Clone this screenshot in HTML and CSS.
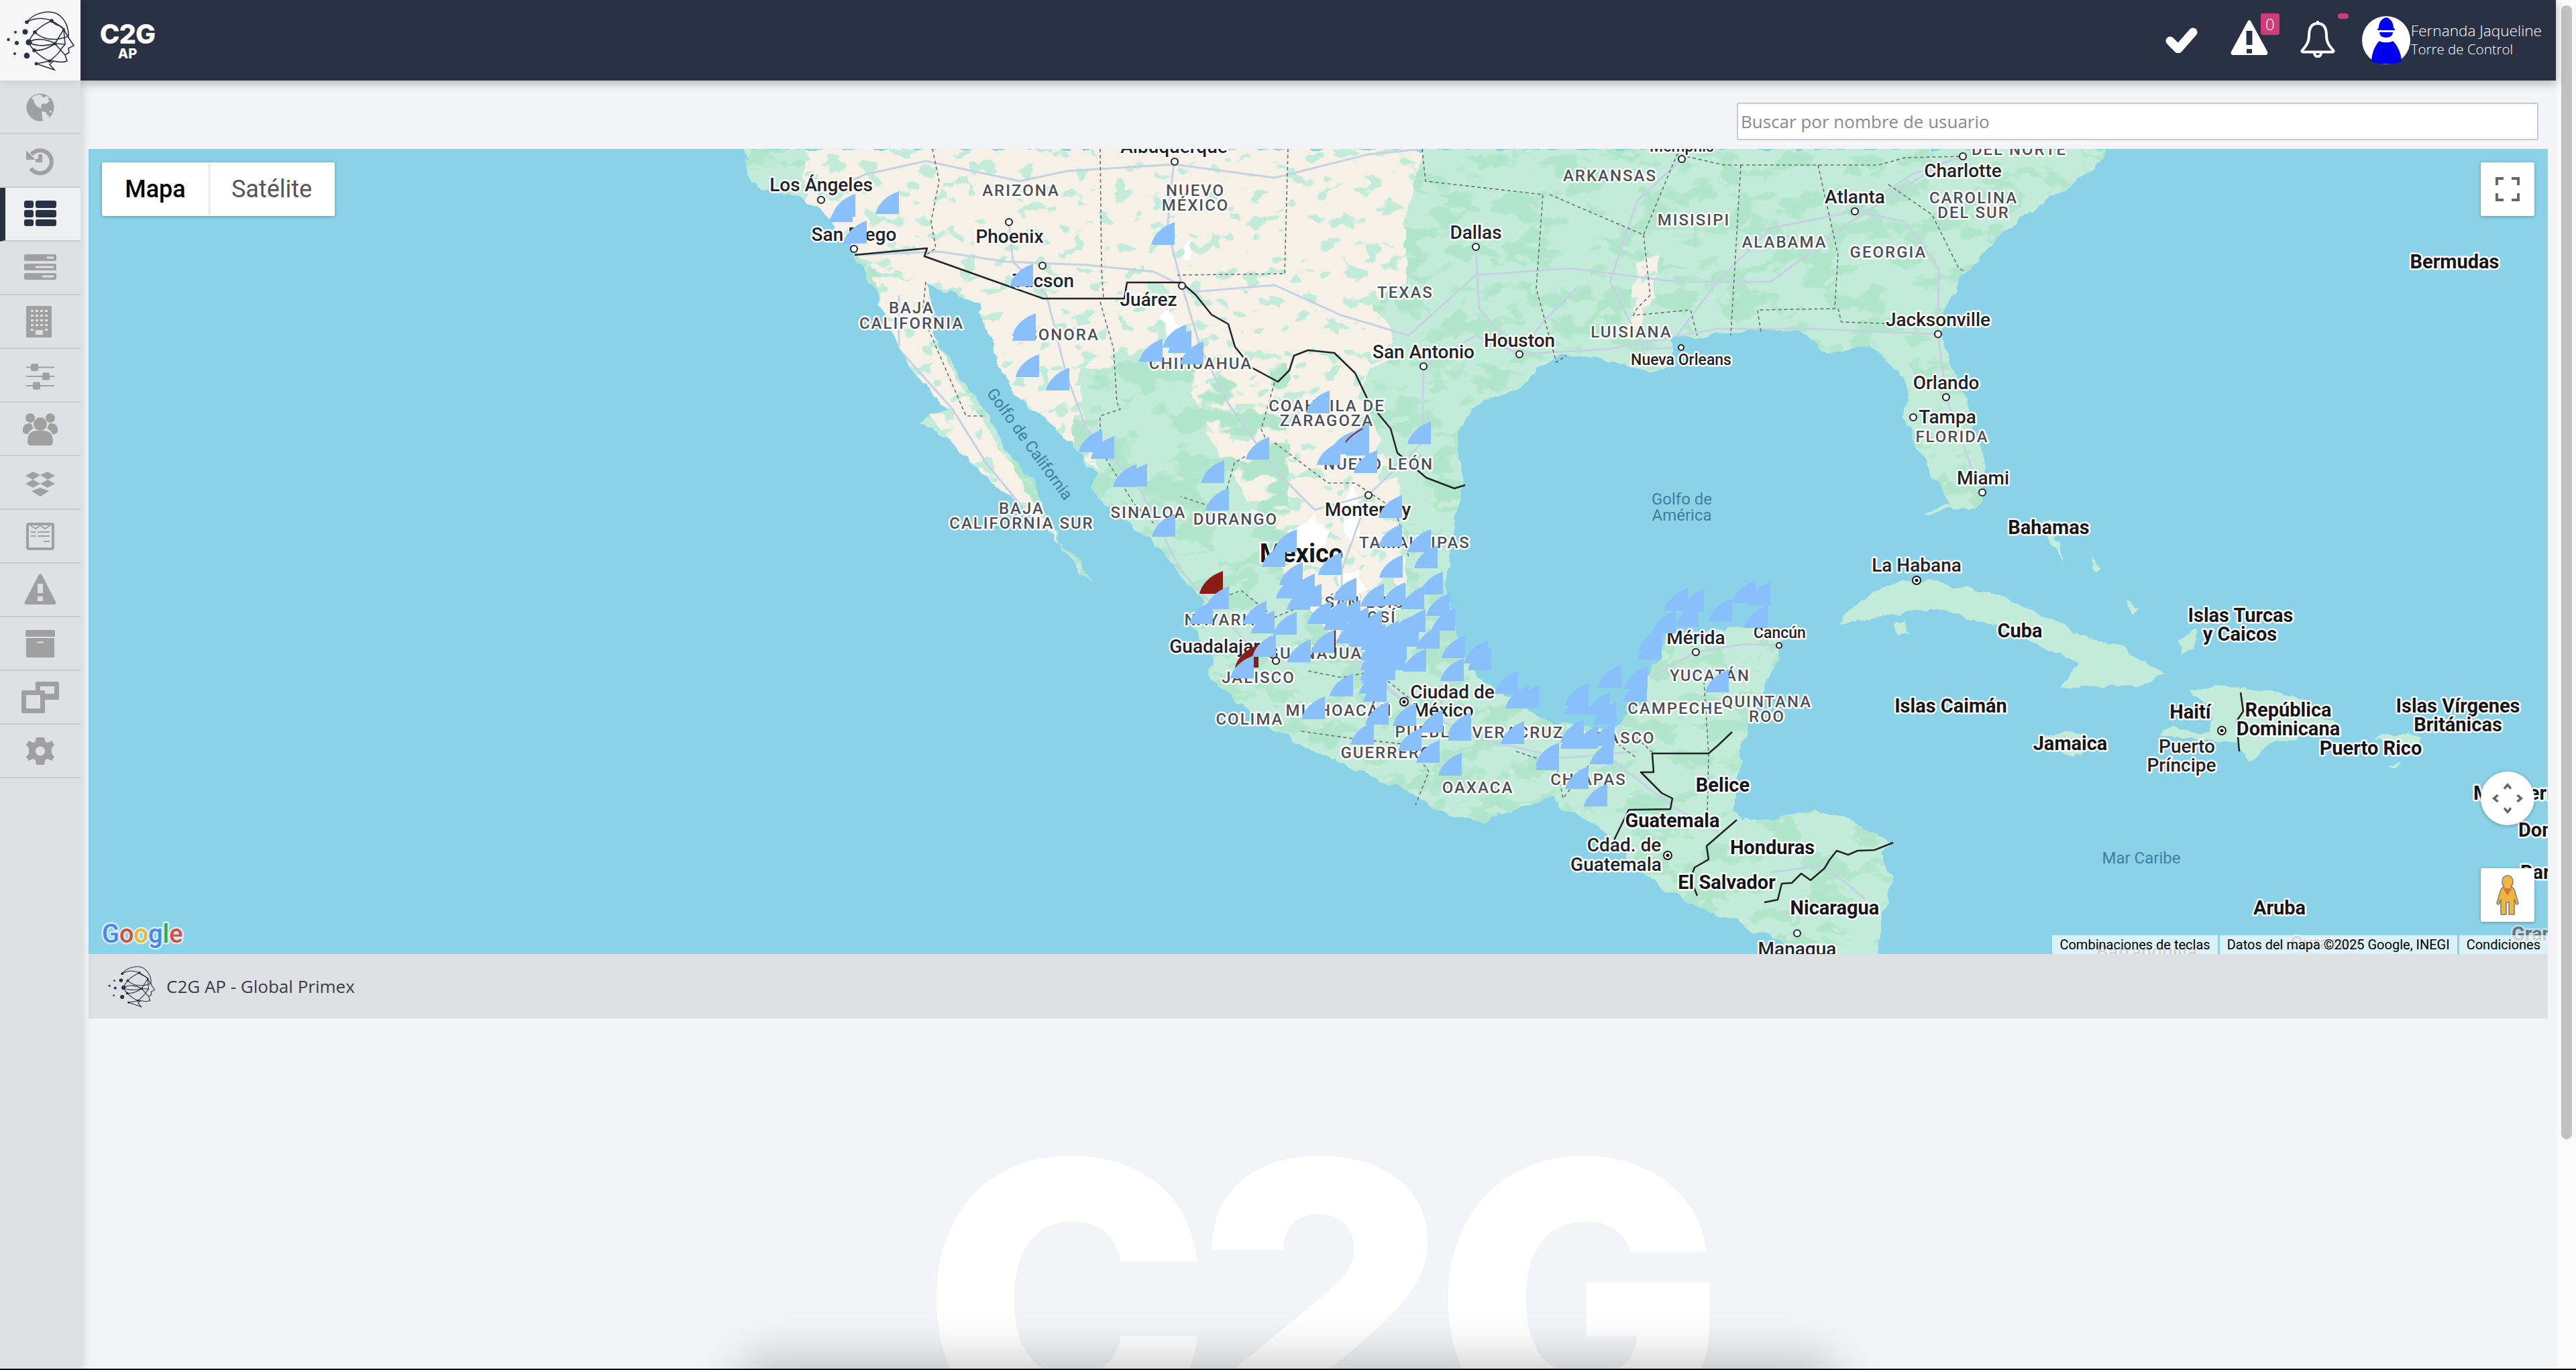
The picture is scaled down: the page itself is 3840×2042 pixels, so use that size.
FILE: index.html
```html
<!DOCTYPE html>
<html lang="es">
<head>
    <meta charset="UTF-8">
    <title>C2G AP - Global Primex</title>
    <link rel="stylesheet" href="styles.css">
</head>
<body>
    <svg class="defs" width="0" height="0">
        <symbol id="head" viewBox="8 8 104 92">
            <g fill="none" stroke="#2b3144" stroke-width="1.6">
                <path d="M40 27C50 13 76 6 90 18C100 27 103 40 102 50L110 62L102 66L103 72L97 76L100 85C92 88 84 86 80 85L74 90L81 98L54 89"/>
                <path d="M40 27C52 20 66 20 77 25C86 30 92 34 95 38L102 50M77 25C66 30 58 35 52 42C47 48 44 52 43 57C45 63 48 66 51 69C58 76 66 82 74 85L80 85"/>
                <path d="M52 42C60 50 72 54 88 52L100 49M43 57C54 50 70 52 82 59C86 64 92 70 97 76M43 57C50 62 66 64 82 59M51 69C62 70 72 66 82 59L95 38M77 25C84 35 92 30 95 38L97 60L82 59M74 85C80 80 88 74 92 66L97 60M54 89L74 85"/>
            </g>
            <g fill="#2b3144">
                <circle cx="40" cy="27" r="2.8"/><circle cx="77" cy="25" r="2.8"/><circle cx="52" cy="42" r="2.8"/><circle cx="95" cy="38" r="2"/>
                <circle cx="82" cy="59" r="2.6"/><circle cx="51" cy="69" r="2.8"/><circle cx="74" cy="85" r="2.4"/><circle cx="54" cy="89" r="2.4"/>
                <circle cx="23" cy="42" r="2"/><circle cx="37.5" cy="41.5" r="4"/><circle cx="12.5" cy="53" r="2.2"/><circle cx="25" cy="58" r="3"/>
                <circle cx="43" cy="57" r="4.6"/><circle cx="22" cy="74" r="2"/><circle cx="40" cy="77" r="4.4"/>
            </g>
        </symbol>
        <path id="w" d="M0 34C3 20 15 7 35 0V34Z"/>
    </svg>

    <div class="page">
        <aside class="sidebar">
            <div class="side-logo"><svg class="logo-big"><use href="#head"/></svg></div>
            <nav class="side-nav">
                <a class="nav-item">
                    <svg viewBox="0 0 120 78"><circle cx="60" cy="40" r="20.5"/><path class="cut" d="M53 22l6-1 4 1-1 2 4 1 3-2 5 3-3 2 3 2-5 5-5-1-3 3 1 4-5-1-5-5-2-6-3-2 2-3zM62 46l6 1 2 4 3 1 0 4-8 6-2-6zM74 44l4 3-4 1z"/></svg>
                </a>
                <a class="nav-item">
                    <svg viewBox="0 0 120 78"><path class="line" d="M47 30A17 17 0 1 1 46 51"/><path d="M39 24V38H53Z"/><path d="M57 30H63V42H53V37H57Z"/></svg>
                </a>
                <a class="nav-item active">
                    <svg viewBox="0 0 120 78"><rect x="36" y="19" width="14" height="11" rx="3"/><rect x="53" y="19" width="31" height="11" rx="3"/><rect x="36" y="33" width="14" height="11" rx="3"/><rect x="53" y="33" width="31" height="11" rx="3"/><rect x="36" y="47" width="14" height="10" rx="3"/><rect x="53" y="47" width="31" height="10" rx="3"/></svg>
                </a>
                <a class="nav-item">
                    <svg viewBox="0 0 120 78"><rect x="36" y="19" width="48" height="10" rx="2.5"/><rect x="36" y="33" width="48" height="10" rx="2.5"/><rect x="36" y="47" width="48" height="10" rx="2.5"/><path class="cut" d="M70 22.500h10v3H70zM53 36.500h27v3H53zM63 50.500h17v3H63z"/></svg>
                </a>
                <a class="nav-item">
                    <svg viewBox="0 0 120 78"><rect x="39" y="16" width="38" height="47" rx="1.500"/><path class="cut" d="M46 22h4v3h-4zM53 22h4v3h-4zM60 22h4v3h-4zM67 22h4v3h-4zM46 29h4v3h-4zM53 29h4v3h-4zM60 29h4v3h-4zM67 29h4v3h-4zM46 36h4v3h-4zM53 36h4v3h-4zM60 36h4v3h-4zM67 36h4v3h-4zM46 43h4v3h-4zM53 43h4v3h-4zM60 43h4v3h-4zM67 43h4v3h-4zM46 50h4v3h-4zM67 50h4v3h-4zM53 52h11v7H53z"/></svg>
                </a>
                <a class="nav-item">
                    <svg viewBox="0 0 120 78"><path d="M39 26.500h42v2H39zM39 40h42v2H39zM39 54h42v2H39z"/><rect x="46" y="22" width="11" height="11" rx="2"/><rect x="63" y="35.500" width="11" height="11" rx="2"/><rect x="49" y="49.500" width="11" height="11" rx="2"/></svg>
                </a>
                <a class="nav-item">
                    <svg viewBox="0 0 120 78"><circle cx="45" cy="23" r="7"/><circle cx="75" cy="23" r="7"/><path d="M34 42C34 33 38 31 46 31L50 38C46 41 43 43 42 47C37 47 34 46 34 42ZM86 42C86 33 82 31 74 31L70 38C74 41 77 43 78 47C83 47 86 46 86 42Z"/><circle cx="60" cy="32" r="10"/><path d="M41 58C41 46 47 42 55 42H65C73 42 79 46 79 58C79 62 77 64 73 64H47C43 64 41 62 41 58Z"/></svg>
                </a>
                <a class="nav-item">
                    <svg viewBox="0 0 120 78"><path d="M38 29L49 23L60 28L49 35ZM60 28L71 23L82 29L71 35ZM38 41L49 35L60 41L49 47ZM60 41L71 35L82 41L71 47Z"/><path d="M47 52L60 47L73 52L60 60Z"/></svg>
                </a>
                <a class="nav-item">
                    <svg viewBox="0 0 120 78"><rect class="outline" x="41" y="21" width="38" height="37" rx="2"/><path class="thin" d="M45 23L53 28L60 23L67 28L75 23"/><path d="M46 32h7v2h-7zM56 32h18v2H56zM46 38h7v2h-7zM56 38h18v2H56zM65 46h9v2h-9z"/></svg>
                </a>
                <a class="nav-item">
                    <svg viewBox="0 0 120 78"><path fill-rule="evenodd" d="M60 15C61 15 62 16 63 18L83 57C84 59 83 61 81 61H39C37 61 36 59 37 57L57 18C58 16 59 15 60 15ZM56 30V44H64V30ZM56 49V56H64V49Z"/></svg>
                </a>
                <a class="nav-item">
                    <svg viewBox="0 0 120 78"><rect x="38" y="19" width="44" height="10" rx="1.500"/><path fill-rule="evenodd" d="M39 31H81V59C81 60 80 60 79 60H41C40 60 39 60 39 59ZM55 36.500V38.500H65V36.500Z"/></svg>
                </a>
                <a class="nav-item">
                    <svg viewBox="0 0 120 78"><path fill-rule="evenodd" d="M53 18C53 17 54 16 55 16H86C87 16 88 17 88 18V41C88 42 87 43 86 43H67V34H81V23H60V29H53ZM32 31C32 30 33 29 34 29H65C66 29 67 30 67 31V61C67 62 66 63 65 63H34C33 63 32 62 32 61ZM39 36V56H60V36Z"/></svg>
                </a>
                <a class="nav-item">
                    <svg viewBox="0 0 120 78"><path fill-rule="evenodd" d="M54 19H66L67 25L71 27L77 24L81 30L77 35V43L81 48L77 54L71 51L67 53L66 60H54L53 53L49 51L43 54L39 48L43 43V35L39 30L43 24L49 27L53 25ZM60 32.500A7 7 0 1 0 60.010 46.500A7 7 0 1 0 60 32.500Z"/></svg>
                </a>
            </nav>
        </aside>

        <div class="main">
            <header class="topbar">
                <div class="brand-mark">
                    <span class="brand-big">C2G</span>
                    <span class="brand-small">AP</span>
                </div>
                <div class="top-actions">
                    <svg class="ico-check" width="49" height="38" viewBox="0 0 49 38"><path d="M8 20L20 32L42 7"/></svg>
                    <div class="alert-wrap">
                        <svg width="56" height="52" viewBox="0 0 56 52"><path fill-rule="evenodd" d="M28 0C29 0 30 1 31 3L55 47C56 50 55 52 52 52H4C1 52 0 50 1 47L25 3C26 1 27 0 28 0ZM23.500 16V37H32.500V16ZM24 43V49.500H32V43Z" fill="#fff"/></svg>
                        <span class="badge">0</span>
                    </div>
                    <div class="bell-wrap">
                        <svg width="52" height="56" viewBox="0 0 52 56"><path class="bell" d="M26 5C16 5 13 13 13 23C13 33 9 38 3 45C2 46 2 47.500 4 47.500H48C50 47.500 50 46 49 45C43 38 39 33 39 23C39 13 36 5 26 5Z"/><path class="bell" d="M26 1V5M21 49C21 56 31 56 31 49"/></svg>
                        <span class="dot"></span>
                    </div>
                    <svg class="avatar" width="72" height="72" viewBox="0 0 72 72">
                        <circle cx="36" cy="36" r="36" fill="#fff"/>
                        <path fill="#0000ee" d="M25 18C25 9 30 3 36 2C42 3 47 9 47 18L49 19V21H23V19ZM26 24H46C46 29 42 32 36 32C30 32 26 29 26 24ZM26 37C29 40 43 40 46 37C53 44 58 54 59 67C52 73 20 73 14 67C15 54 19 44 26 37Z"/>
                    </svg>
                    <div class="user-info">
                        <span class="user-name">Fernanda Jaqueline</span>
                        <span class="user-role">Torre de Control</span>
                    </div>
                </div>
            </header>

            <div class="search-row">
                <input class="search" type="text" placeholder="Buscar por nombre de usuario">
            </div>

            <section class="map">
                <svg class="map-art" viewBox="132 222 3666 1200" width="3666" height="1200">
                    <defs>
                        <polygon id="land" points="1110,222 1115,267 1150,287 1220,305 1269,370 1297,418 1305,441 1340,520 1375,568 1410,611 1371,631 1417,659 1452,694 1501,734 1550,781 1585,813 1613,840 1624,869 1600,840 1570,790 1543,722 1501,675 1473,619 1431,560 1389,497 1382,421 1410,433 1459,453 1494,556 1515,588 1571,635 1599,663 1634,706 1627,730 1683,781 1726,813 1775,874 1796,898 1775,933 1810,985 1800,1000 1817,1024 1895,1083 1951,1115 2021,1147 2091,1178 2154,1210 2210,1226 2274,1202 2309,1190 2344,1214 2379,1230 2470,1320 2530,1350 2640,1396 2718,1430 2800,1430 2804,1380 2818,1313 2804,1274 2818,1256 2790,1240 2734,1211 2692,1209 2650,1221 2596,1222 2582,1210 2596,1119 2603,1095 2645,993 2660,945 2618,937 2491,941 2470,985 2442,1056 2407,1084 2316,1080 2246,1040 2203,1004 2182,977 2168,937 2154,878 2158,819 2182,724 2170,659 2181,623 2216,596 2268,576 2296,544 2335,528 2409,540 2465,556 2493,544 2493,501 2528,505 2556,497 2605,493 2682,493 2725,528 2788,513 2830,556 2844,584 2840,623 2861,675 2914,762 2949,758 2963,694 2935,615 2893,497 2907,437 2956,378 2998,335 3061,291 3125,248 3139,222"/>
                        <clipPath id="land-clip"><use href="#land"/></clipPath>
                        <filter id="rough" x="0" y="0" width="100%" height="100%" color-interpolation-filters="sRGB">
                            <feTurbulence type="fractalNoise" baseFrequency="0.04" numOctaves="3" seed="4"/>
                            <feDisplacementMap in="SourceGraphic" scale="16" xChannelSelector="R" yChannelSelector="G"/>
                        </filter>
                        <filter id="mottle" x="0" y="0" width="100%" height="100%" color-interpolation-filters="sRGB">
                            <feTurbulence type="fractalNoise" baseFrequency="0.016 0.028" numOctaves="3" seed="7"/>
                            <feColorMatrix type="matrix" values="0 0 0 0 0.70  0 0 0 0 0.90  0 0 0 0 0.80  0 0 0 14 -7"/>
                        </filter>
                        <filter id="fleck" x="0" y="0" width="100%" height="100%" color-interpolation-filters="sRGB">
                            <feTurbulence type="fractalNoise" baseFrequency="0.035 0.05" numOctaves="2" seed="12"/>
                            <feColorMatrix type="matrix" values="0 0 0 0 0.76  0 0 0 0 0.92  0 0 0 0 0.85  0 0 0 18 -11"/>
                        </filter>
                    </defs>
                    <rect class="water" x="132" y="222" width="3666" height="1200"/>
                    <g filter="url(#rough)">
                        <rect x="132" y="222" width="3666" height="1200" fill="none"/>
                        <use href="#land" class="green"/>
                        <g class="green">
                            <polygon points="2741,930 2769,898 2818,871 2882,865 2980,890 3043,914 3099,946 3162,966 3190,985 3229,1007 3190,1021 3071,1025 3099,985 3029,958 2966,930 2889,910 2825,914 2769,926"/>
                            <polygon points="3264,1029 3296,1023 3345,1025 3422,1037 3485,1080 3492,1092 3394,1104 3352,1132 3334,1108 3253,1100 3218,1096 3222,1084 3296,1092 3296,1053"/>
                            <polygon points="3036,1100 3085,1090 3134,1108 3092,1128 3056,1112"/>
                            <polygon points="3545,1096 3611,1096 3611,1112 3555,1112"/>
                            <polygon points="2826,930 2840,924 2846,945 2830,948"/>
                            <polygon points="3046,780 3056,770 3064,800 3075,840 3060,815"/>
                            <polygon points="3250,955 3275,940 3272,970 3252,976"/>
                            <polygon points="2870,765 2900,752 2915,755 2880,768"/>
                            <polygon points="3560,1140 3580,1136 3570,1145"/>
                            <polygon points="3170,895 3190,905 3178,915"/>
                            <polygon points="3120,830 3135,850 3122,852"/>
                        </g>
                        <g clip-path="url(#land-clip)">
                            <rect class="mottle" x="132" y="222" width="3666" height="1200"/>
                            <polygon class="beige" points="1200,222 2120,222 2095,330 2095,420 2045,455 2090,520 2045,548 2025,590 2050,640 2085,720 2095,820 2090,900 2040,965 1985,950 1930,880 1880,800 1860,740 1800,660 1785,600 1770,540 1700,520 1640,560 1620,640 1640,700 1560,640 1480,560 1440,440 1370,420 1300,400 1200,300"/>
                            <polygon class="beige" points="1300,410 1380,420 1400,520 1560,780 1630,880 1560,840 1400,640 1330,520"/>
                            <polygon class="beige" points="2440,390 2470,380 2465,450 2430,470"/>
                            <polygon class="beige" points="2420,500 2445,450 2450,480 2435,510"/>
                            <rect class="fleck" x="132" y="222" width="3666" height="1200"/>
                            <g class="green">
                                <polygon points="1610,550 1770,545 1795,640 1860,750 1900,840 1780,830 1690,760 1640,690 1615,620"/>
                                <polygon points="2070,840 2090,900 2060,960 2035,900"/>
                                <polygon points="1900,880 1960,950 1900,960 1880,920"/>
                            </g>
                            <rect class="mottle" x="1600" y="540" width="320" height="300"/>
                            <g class="snow">
                                <polygon points="1930,790 1960,770 1985,795 1960,835 1935,830"/>
                                <polygon points="1995,860 2025,850 2040,880 2005,900"/>
                                <polygon points="2000,750 2020,720 2030,790 2010,810"/>
                                <polygon points="1730,470 1745,460 1755,490 1740,500"/>
                                <polygon points="1765,365 1775,360 1775,385 1762,385"/>
                            </g>
                        </g>
                    </g>
                    <g class="road" clip-path="url(#land-clip)">
                        <polyline points="1220,290 1290,260 1380,240 1520,270 1590,255 1750,245 1900,265 2040,230 2120,222"/>
                        <polyline points="1280,380 1400,375 1500,390 1620,395 1720,405 1780,435 1900,425 2000,470 2100,500 2200,410 2340,400 2500,420 2640,420 2760,330 2900,240"/>
                        <polyline points="2200,368 2205,460 2265,528 2300,480 2350,430"/>
                        <polyline points="2122,546 2200,500 2265,528 2400,520 2560,490 2700,490 2889,498 2901,592 2940,700"/>
                        <polyline points="1504,331 1510,390 1560,440 1590,560 1620,640 1700,730 1760,850 1860,960"/>
                        <polyline points="1750,240 1740,340 1762,426 1790,520 1830,600 1900,700 1960,760 2040,738 2120,660 2122,546"/>
                        <polyline points="1340,440 1340,520 1420,610 1470,690 1560,800"/>
                        <polyline points="2040,738 2000,850 2000,960 2093,1046 2180,1010"/>
                        <polyline points="1902,985 2000,975 2093,1046 2200,1100 2330,1130 2440,1120"/>
                        <polyline points="2528,972 2460,1010 2420,1070 2400,1130 2490,1200 2560,1240"/>
                        <polyline points="2528,972 2600,960 2652,962"/>
                        <polyline points="2093,1046 2120,1120 2200,1180"/>
                        <polyline points="2507,237 2440,300 2400,420 2450,520 2506,518"/>
                        <polyline points="2765,315 2640,340 2560,420 2500,500"/>
                        <polyline points="2765,315 2840,330 2890,400 2889,498"/>
                        <polyline points="2926,233 2850,260 2765,315"/>
                        <polyline points="2640,1300 2720,1290 2780,1340"/>
                        <polyline points="2870,870 2960,890 3060,960 3120,985"/>
                        <polyline points="3260,1040 3340,1060 3440,1060"/>
                    </g>
                    <g class="state-line">
                        <polyline points="1390,222 1400,270 1388,330 1395,370 1378,382"/>
                        <polyline points="1640,222 1642,400 1645,445"/>
                        <polyline points="1920,222 1915,408 1755,410"/>
                        <polyline points="2120,222 2125,270 2300,290 2290,430 2320,540 2335,530"/>
                        <polyline points="2310,290 2450,350 2500,230 2570,246 2800,246 2840,235 2926,233"/>
                        <polyline points="2450,350 2460,440 2440,460 2435,470 2520,462 2530,500"/>
                        <polyline points="2595,246 2580,500"/>
                        <polyline points="2710,246 2740,380 2735,460 2620,462 2625,495"/>
                        <polyline points="2740,460 2745,480 2810,482"/>
                        <polyline points="2815,275 2880,320 2920,400 2930,405"/>
                        <polyline points="1380,420 1375,470 1440,620 1470,620"/>
                        <polyline points="1640,450 1660,520 1665,600 1670,610 1640,620 1640,670 1690,750 1720,780"/>
                        <polyline points="1900,570 1880,640 1890,660 1840,690 1820,760 1760,740"/>
                        <polyline points="1900,660 1980,720 2020,720 2080,760 2100,830"/>
                        <polyline points="1800,900 1850,880 1900,920 1950,900 2000,880"/>
                        <polyline points="1950,1000 2000,1010 2050,1000 2100,1040"/>
                        <polyline points="1940,1090 2010,1100 2100,1110 2130,1150 2110,1200"/>
                        <polyline points="2260,1120 2320,1140 2330,1190 2400,1100 2440,1130"/>
                        <polyline points="2540,1015 2547,1123 2545,1215"/>
                        <polyline points="2440,1100 2465,1123"/>
                    </g>
                    <g class="border">
                        <polyline points="1274,380 1382,370 1378,382 1555,445 1676,445 1680,421 1761,421 1782,439 1806,469 1831,483 1841,517 1866,548 1905,569 1922,552 1929,530 1950,522 1989,526 2020,556 2041,600 2073,639 2083,675 2126,712 2168,728 2184,723"/>
                        <polyline points="2582,1091 2562,1110 2547,1123 2463,1123 2465,1151 2446,1151 2477,1182 2493,1190 2490,1206 2428,1207 2407,1250 2406,1268"/>
                        <polyline points="2589,1222 2544,1261 2547,1281 2526,1293 2520,1310 2530,1335"/>
                        <polyline points="2822,1256 2794,1267 2769,1268 2755,1274 2738,1268 2727,1282 2720,1294 2699,1312 2685,1302 2671,1316 2656,1317 2650,1341 2630,1345"/>
                        <polyline points="3340,1032 3344,1060 3334,1075 3338,1120"/>
                    </g>

                    <g class="state">
                        <text x="1522" y="292">ARIZONA</text>
                        <text x="1782" y="292">NUEVO</text>
                        <text x="1782" y="314">MÉXICO</text>
                        <text x="2095" y="444">TEXAS</text>
                        <text x="2400" y="270">ARKANSAS</text>
                        <text x="2525" y="336">MISISIPI</text>
                        <text x="2660" y="369">ALABAMA</text>
                        <text x="2815" y="384">GEORGIA</text>
                        <text x="2942" y="303">CAROLINA</text>
                        <text x="2942" y="325">DEL SUR</text>
                        <text x="3010" y="231">DEL NORTE</text>
                        <text x="2432" y="503">LUISIANA</text>
                        <text x="2910" y="659">FLORIDA</text>
                        <text x="1359" y="467">BAJA</text>
                        <text x="1359" y="490">CALIFORNIA</text>
                        <text x="1523" y="766">BAJA</text>
                        <text x="1523" y="788">CALIFORNIA SUR</text>
                        <text x="1585" y="507">SONORA</text>
                        <text x="1790" y="550">CHIHUAHUA</text>
                        <text x="1978" y="613">COAHUILA DE</text>
                        <text x="1978" y="635">ZARAGOZA</text>
                        <text x="2055" y="700">NUEVO LEÓN</text>
                        <text x="1712" y="772">SINALOA</text>
                        <text x="1842" y="782">DURANGO</text>
                        <text x="2109" y="817">TAMAULIPAS</text>
                        <text x="1821" y="932">NAYARIT</text>
                        <text x="1876" y="1018">JALISCO</text>
                        <text x="1977" y="982">GUANAJUATO</text>
                        <text x="2034" y="906">SAN LUIS</text>
                        <text x="2034" y="928">POTOSÍ</text>
                        <text x="1996" y="1067">MICHOACÁN</text>
                        <text x="1863" y="1080">COLIMA</text>
                        <text x="2130" y="1099">PUEBLA</text>
                        <text x="2263" y="1100">VERACRUZ</text>
                        <text x="2067" y="1130">GUERRERO</text>
                        <text x="2203" y="1182">OAXACA</text>
                        <text x="2368" y="1170">CHIAPAS</text>
                        <text x="2407" y="1108">TABASCO</text>
                        <text x="2498" y="1064">CAMPECHE</text>
                        <text x="2549" y="1015">YUCATÁN</text>
                        <text x="2634" y="1054">QUINTANA</text>
                        <text x="2634" y="1076">ROO</text>
                    </g>
                    <g class="sea">
                        <text x="2507" y="752">Golfo de</text>
                        <text x="2507" y="776">América</text>
                        <text x="3192" y="1287">Mar Caribe</text>
                        <text x="1535" y="670" transform="rotate(54 1535 662)">Golfo de California</text>
                    </g>
                    <g class="city">
                        <text x="1224" y="285">Los Ángeles</text>
                        <text x="1273" y="359">San Diego</text>
                        <text x="1505" y="362">Phoenix</text>
                        <text x="1750" y="228">Albuquerque</text>
                        <text x="1555" y="428">Tucson</text>
                        <text x="1712" y="456">Juárez</text>
                        <text x="2122" y="534">San Antonio</text>
                        <text x="2200" y="356">Dallas</text>
                        <text x="2265" y="517">Houston</text>
                        <text class="small" x="2507" y="226">Memphis</text>
                        <text x="2765" y="303">Atlanta</text>
                        <text x="2926" y="264">Charlotte</text>
                        <text class="small" x="2506" y="544">Nueva Orleans</text>
                        <text x="2889" y="486">Jacksonville</text>
                        <text x="2901" y="580">Orlando</text>
                        <text x="2903" y="631">Tampa</text>
                        <text x="2956" y="722">Miami</text>
                        <text x="2857" y="852">La Habana</text>
                        <text x="3260" y="1122">Puerto</text>
                        <text x="3252" y="1150">Príncipe</text>
                        <text x="2039" y="769">Monterrey</text>
                        <text x="1818" y="973">Guadalajara</text>
                        <text x="2165" y="1041">Ciudad de</text>
                        <text x="2151" y="1068">México</text>
                        <text x="2528" y="960">Mérida</text>
                        <text class="small" x="2653" y="951">Cancún</text>
                        <text x="2421" y="1269">Cdad. de</text>
                        <text x="2409" y="1298">Guatemala</text>
                        <text x="2679" y="1424">Managua</text>
                        <text class="faded" x="3466" y="1415">Curazao</text>
                        <text class="faded" x="3200" y="1428">Barranquilla</text>
                    </g>
                    <g class="country">
                        <text class="big" x="1940" y="838">México</text>
                        <text x="3659" y="400">Bermudas</text>
                        <text x="3054" y="796">Bahamas</text>
                        <text x="3011" y="950">Cuba</text>
                        <text x="3340" y="927">Islas Turcas</text>
                        <text x="3339" y="955">y Caicos</text>
                        <text x="2908" y="1062">Islas Caimán</text>
                        <text x="3086" y="1118">Jamaica</text>
                        <text x="3265" y="1071">Haití</text>
                        <text x="3411" y="1068">República</text>
                        <text x="3411" y="1096">Dominicana</text>
                        <text x="3534" y="1125">Puerto Rico</text>
                        <text x="3664" y="1062">Islas Vírgenes</text>
                        <text x="3664" y="1090">Británicas</text>
                        <text x="3398" y="1363">Aruba</text>
                        <text x="2568" y="1180">Belice</text>
                        <text x="2493" y="1233">Guatemala</text>
                        <text x="2642" y="1273">Honduras</text>
                        <text x="2574" y="1325">El Salvador</text>
                        <text x="2735" y="1363">Nicaragua</text>
                        <text class="edge-left" x="3687" y="1192">Montserrat</text>
                        <text class="edge-left" x="3754" y="1247">Dominica</text>
                        <text class="edge-left" x="3757" y="1310">Barbados</text>
                        <text class="edge-left faded" x="3744" y="1402">Granada</text>
                    </g>
                    <g class="pin">
                        <circle cx="1224" cy="298" r="5"/><circle cx="1273" cy="371" r="5"/><circle cx="1504" cy="331" r="5"/><circle cx="1751" cy="241" r="5"/>
                        <circle cx="1554" cy="396" r="5"/><circle cx="1762" cy="426" r="5"/><circle cx="2122" cy="546" r="5"/><circle cx="2200" cy="368" r="5"/>
                        <circle cx="2265" cy="528" r="5"/><circle cx="2507" cy="237" r="5"/><circle cx="2765" cy="315" r="5"/><circle cx="2926" cy="233" r="5"/>
                        <circle cx="2506" cy="518" r="4"/><circle cx="2889" cy="498" r="5"/><circle cx="2901" cy="592" r="5"/><circle cx="2852" cy="622" r="5"/>
                        <circle cx="2955" cy="734" r="5"/><circle cx="2040" cy="738" r="5"/><circle cx="1902" cy="985" r="5"/><circle cx="2528" cy="972" r="5"/>
                        <circle cx="2652" cy="962" r="4"/><circle cx="2679" cy="1391" r="5"/>
                    </g>
                    <g class="capital">
                        <circle cx="2857" cy="865" r="6"/><circle cx="3312" cy="1089" r="6"/><circle cx="2093" cy="1046" r="6"/><circle cx="2486" cy="1275" r="6"/>
                    </g>
                    <g class="capital-dot">
                        <circle cx="2857" cy="865" r="2.500"/><circle cx="3312" cy="1089" r="2.500"/><circle cx="2093" cy="1046" r="2.500"/><circle cx="2486" cy="1275" r="2.500"/>
                    </g>

                    <g class="wedge-red">
                        <use href="#w" x="1788" y="851"/>
                        <use href="#w" x="1841" y="961"/>
                        <use href="#w" x="1956" y="939"/>
                    </g>
                    <g class="wedge">
                        <use href="#w" x="1240" y="289"/><use href="#w" x="1236" y="297"/><use href="#w" x="1305" y="285"/><use href="#w" x="1257" y="329"/><use href="#w" x="1716" y="331"/><use href="#w" x="1505" y="393"/>
                        <use href="#w" x="1509" y="467"/><use href="#w" x="1509" y="474"/><use href="#w" x="1514" y="528"/><use href="#w" x="1559" y="548"/><use href="#w" x="1698" y="505"/><use href="#w" x="1733" y="484"/>
                        <use href="#w" x="1741" y="492"/><use href="#w" x="1759" y="509"/><use href="#w" x="1947" y="582"/><use href="#w" x="2098" y="628"/><use href="#w" x="1857" y="651"/><use href="#w" x="1963" y="659"/>
                        <use href="#w" x="2006" y="631"/><use href="#w" x="1982" y="643"/><use href="#w" x="2006" y="645"/><use href="#w" x="2018" y="671"/><use href="#w" x="1608" y="640"/><use href="#w" x="1626" y="650"/>
                        <use href="#w" x="1659" y="692"/><use href="#w" x="1675" y="691"/><use href="#w" x="1790" y="686"/><use href="#w" x="1797" y="727"/><use href="#w" x="1717" y="766"/><use href="#w" x="2055" y="738"/>
                        <use href="#w" x="2055" y="781"/><use href="#w" x="2098" y="789"/><use href="#w" x="2108" y="813"/><use href="#w" x="1898" y="789"/><use href="#w" x="1881" y="811"/><use href="#w" x="1965" y="823"/>
                        <use href="#w" x="2056" y="827"/><use href="#w" x="1907" y="838"/><use href="#w" x="1902" y="858"/><use href="#w" x="1935" y="870"/><use href="#w" x="1987" y="861"/><use href="#w" x="2028" y="870"/>
                        <use href="#w" x="2060" y="868"/><use href="#w" x="2088" y="874"/><use href="#w" x="2116" y="852"/><use href="#w" x="2126" y="884"/><use href="#w" x="2134" y="906"/><use href="#w" x="1949" y="896"/>
                        <use href="#w" x="1973" y="894"/><use href="#w" x="1993" y="894"/><use href="#w" x="2025" y="910"/><use href="#w" x="1853" y="896"/><use href="#w" x="1865" y="910"/><use href="#w" x="1898" y="912"/>
                        <use href="#w" x="1773" y="896"/><use href="#w" x="1797" y="874"/><use href="#w" x="1867" y="945"/><use href="#w" x="1834" y="977"/><use href="#w" x="1919" y="953"/><use href="#w" x="1954" y="939"/>
                        <use href="#w" x="1992" y="925"/><use href="#w" x="2030" y="930"/><use href="#w" x="2050" y="925"/><use href="#w" x="2070" y="918"/><use href="#w" x="2090" y="908"/><use href="#w" x="2035" y="945"/>
                        <use href="#w" x="2060" y="945"/><use href="#w" x="2035" y="965"/><use href="#w" x="2060" y="965"/><use href="#w" x="2030" y="985"/><use href="#w" x="2026" y="1000"/><use href="#w" x="2111" y="933"/>
                        <use href="#w" x="2091" y="967"/><use href="#w" x="2149" y="947"/><use href="#w" x="2182" y="955"/><use href="#w" x="2188" y="965"/><use href="#w" x="2147" y="981"/><use href="#w" x="1982" y="1004"/>
                        <use href="#w" x="2032" y="1012"/><use href="#w" x="2228" y="1000"/><use href="#w" x="2244" y="1022"/><use href="#w" x="2260" y="1021"/><use href="#w" x="2333" y="1018"/><use href="#w" x="2333" y="1031"/>
                        <use href="#w" x="2365" y="1032"/><use href="#w" x="2375" y="1046"/><use href="#w" x="2382" y="991"/><use href="#w" x="2421" y="993"/><use href="#w" x="2420" y="1012"/><use href="#w" x="2542" y="998"/>
                        <use href="#w" x="2442" y="937"/><use href="#w" x="2442" y="949"/><use href="#w" x="2463" y="910"/><use href="#w" x="2481" y="876"/><use href="#w" x="2505" y="878"/><use href="#w" x="2497" y="900"/>
                        <use href="#w" x="2547" y="892"/><use href="#w" x="2582" y="865"/><use href="#w" x="2604" y="868"/><use href="#w" x="2600" y="902"/><use href="#w" x="1940" y="1038"/><use href="#w" x="2035" y="1046"/>
                        <use href="#w" x="2076" y="1048"/><use href="#w" x="2116" y="1058"/><use href="#w" x="2158" y="1062"/><use href="#w" x="2158" y="1070"/><use href="#w" x="2084" y="1085"/><use href="#w" x="2013" y="1076"/>
                        <use href="#w" x="2111" y="1103"/><use href="#w" x="2144" y="1122"/><use href="#w" x="2237" y="1075"/><use href="#w" x="2326" y="1073"/><use href="#w" x="2326" y="1082"/><use href="#w" x="2347" y="1082"/>
                        <use href="#w" x="2372" y="1078"/><use href="#w" x="2289" y="1107"/><use href="#w" x="2289" y="1114"/><use href="#w" x="2370" y="1105"/><use href="#w" x="2333" y="1142"/><use href="#w" x="2361" y="1168"/>
                        <use href="#w" x="2028" y="935"/><use href="#w" x="2045" y="935"/><use href="#w" x="2062" y="935"/><use href="#w" x="2028" y="950"/><use href="#w" x="2045" y="950"/><use href="#w" x="2062" y="950"/>
                        <use href="#w" x="2028" y="965"/><use href="#w" x="2045" y="965"/><use href="#w" x="2028" y="980"/><use href="#w" x="2045" y="980"/><use href="#w" x="1973" y="905"/><use href="#w" x="2005" y="905"/>
                        <use href="#w" x="1925" y="855"/><use href="#w" x="1918" y="875"/><use href="#w" x="2080" y="930"/><use href="#w" x="2010" y="930"/>
                    </g>
                    <path class="sliver" d="M2006 659C2012 650 2022 644 2031 639"/>
                    <text class="google" y="1405"><tspan x="152" class="g-blue">G</tspan><tspan class="g-red">o</tspan><tspan class="g-yellow">o</tspan><tspan class="g-blue">g</tspan><tspan class="g-green">l</tspan><tspan class="g-red">e</tspan></text>
                </svg>

                <div class="map-type">
                    <button class="type-btn on">Mapa</button>
                    <button class="type-btn">Satélite</button>
                </div>
                <button class="map-btn full-btn">
                    <svg width="36" height="36" viewBox="0 0 36 36"><path d="M0 0H12V4H4V12H0ZM24 0H36V12H32V4H24ZM0 24H4V32H12V36H0ZM32 24H36V36H24V32H32Z"/></svg>
                </button>
                <button class="map-btn move-btn">
                    <svg width="46" height="46" viewBox="0 0 46 46"><path d="M23 0L29 7L27 10L23 5.500L19 10L17 7ZM23 46L17 39L19 36L23 40.500L27 36L29 39ZM0 23L7 17L10 19L5.500 23L10 27L7 29ZM46 23L39 29L36 27L40.500 23L36 19L39 17Z"/></svg>
                </button>
                <button class="map-btn peg-btn">
                    <svg width="34" height="60" viewBox="0 0 34 60"><path class="peg" d="M17 1C22 1 25 5 25 10C25 14 24 16 22 18C26 19 27 21 28 25L33 42C33 44 30 45 29 42L27 36V59H19V41H15V59H7V36L5 42C4 45 1 44 1 42L6 25C7 21 8 19 12 18C10 16 9 14 9 10C9 5 12 1 17 1Z"/><path class="peg-neck" d="M10 20H24L17 31Z"/></svg>
                </button>
                <div class="attribution">
                    <span>Combinaciones de teclas</span>
                    <span>Datos del mapa ©2025 Google, INEGI</span>
                    <span>Condiciones</span>
                </div>
            </section>

            <footer class="map-foot">
                <svg class="logo-small"><use href="#head"/></svg>
                <span>C2G AP - Global Primex</span>
            </footer>

            <div class="backdrop">
                <span class="backdrop-text">C2G</span>
                <div class="backdrop-shade"></div>
            </div>
        </div>

        <div class="scrollbar"><div class="thumb"></div></div>
    </div>
    <div class="edge"></div>
</body>
</html>
```

FILE: styles.css
```css
* {
    box-sizing: border-box;
}

html, body {
    height: 100%;
    margin: 0;
    overflow: hidden;
}

body {
    display: flex;
    flex-direction: column;
    background: #f2f4f8;
    font-family: "Open Sans", sans-serif;
}

.defs {
    position: absolute;
}

.page {
    flex: 1;
    display: flex;
    min-height: 0;
}

.edge {
    height: 2px;
    background: #000;
}

/* Sidebar */
.sidebar {
    position: relative;
    z-index: 2;
    width: 120px;
    flex: none;
    background: #dee0e4;
    box-shadow: 4px 0 12px rgba(0, 0, 0, 0.14);
}

.side-logo {
    height: 120px;
    display: flex;
    align-items: center;
    justify-content: center;
    background: #f7f7f7;
    box-shadow: 0 4px 10px rgba(0, 0, 0, 0.08);
}

.logo-big {
    width: 104px;
    height: 92px;
}

.nav-item {
    display: block;
    height: 80px;
    border-bottom: 2px solid #c9cbce;
    fill: #a0a0a0;
}

.nav-item svg {
    display: block;
    width: 120px;
    height: 78px;
}

.nav-item .cut {
    fill: #dee0e4;
}

.nav-item .line {
    fill: none;
    stroke: #a0a0a0;
    stroke-width: 6;
}

.nav-item .outline {
    fill: none;
    stroke: #a0a0a0;
    stroke-width: 4;
}

.nav-item .thin {
    fill: none;
    stroke: #a0a0a0;
    stroke-width: 2;
}

.nav-item.active {
    background: #eeeff1;
    border-left: 8px solid #2b3144;
    fill: #2b3144;
}

.nav-item.active svg {
    margin-left: -8px;
}

/* Main column */
.main {
    position: relative;
    flex: 1;
    min-width: 0;
    display: flex;
    flex-direction: column;
}

.topbar {
    position: relative;
    z-index: 1;
    height: 120px;
    flex: none;
    display: flex;
    align-items: center;
    justify-content: space-between;
    padding: 0 21px 0 30px;
    background: #2b3144;
    box-shadow: 0 4px 14px rgba(0, 0, 0, 0.28);
    color: #fff;
}

.brand-mark {
    display: flex;
    flex-direction: column;
    align-items: center;
    width: 80px;
    margin-top: 2px;
    font-family: Inter, sans-serif;
    font-weight: 800;
}

.brand-big {
    font-size: 40px;
    line-height: 38px;
    letter-spacing: -1px;
}

.brand-small {
    font-size: 20px;
    line-height: 20px;
}

.top-actions {
    display: flex;
    align-items: center;
}

.ico-check {
    margin-right: 49px;
}

.ico-check path {
    fill: none;
    stroke: #fff;
    stroke-width: 13;
    stroke-linejoin: round;
    stroke-linecap: round;
}

.alert-wrap {
    position: relative;
    width: 56px;
    height: 52px;
    margin-right: 48px;
    margin-top: -8px;
}

.alert-wrap svg, .bell-wrap svg {
    display: block;
}

.badge {
    position: absolute;
    top: -10px;
    left: 45px;
    width: 28px;
    height: 32px;
    border-radius: 3px;
    background: #d13b78;
    font-size: 24px;
    line-height: 32px;
    font-weight: 300;
    text-align: center;
}

.bell-wrap {
    position: relative;
    width: 52px;
    height: 56px;
    margin-right: 40px;
    margin-top: -4px;
}

.bell {
    fill: none;
    stroke: #fff;
    stroke-width: 4;
}

.dot {
    position: absolute;
    top: -10px;
    left: 56px;
    width: 16px;
    height: 8px;
    border-radius: 4px;
    background: #d13b78;
}

.avatar {
    flex: none;
}

.user-info {
    display: flex;
    flex-direction: column;
    margin-left: 1px;
    margin-top: -2px;
    font-weight: 300;
    white-space: nowrap;
}

.user-name {
    font-size: 22.600px;
    line-height: 28px;
}

.user-role {
    font-size: 20.500px;
    line-height: 26px;
}

.search-row {
    flex: none;
    display: flex;
    justify-content: flex-end;
    padding: 33px 26px 13px 0;
}

.search {
    width: 1195px;
    height: 56px;
    padding: 0 4px;
    border: 2px solid #c8c8c8;
    border-radius: 3px;
    background: #fff;
    font-family: "Open Sans", sans-serif;
    font-size: 26px;
}

.search::placeholder {
    color: #8a8a8a;
}

/* Map */
.map {
    position: relative;
    flex: none;
    width: 3666px;
    height: 1200px;
    margin-left: 12px;
    overflow: hidden;
    font-family: Roboto, sans-serif;
}

.map-art {
    display: block;
}

.water {
    fill: #89d2e7;
}

.green, .green polygon {
    fill: #c3ebd9;
}

.beige {
    fill: #f5f1e8;
}

.mottle {
    filter: url(#mottle);
}

.fleck {
    filter: url(#fleck);
}

.snow polygon {
    fill: #fff;
}

.road polyline {
    fill: none;
    stroke: #c5d3e0;
    stroke-width: 3;
}

.state-line polyline {
    fill: none;
    stroke: #6a6f72;
    stroke-width: 1.6;
    stroke-dasharray: 5 4;
}

.border polyline {
    fill: none;
    stroke: #202224;
    stroke-width: 2.500;
    stroke-linejoin: round;
}

.map-art text {
    text-anchor: middle;
    paint-order: stroke;
    stroke: #fff;
    stroke-width: 5px;
    stroke-linejoin: round;
}

.state text {
    font-size: 24px;
    font-weight: 500;
    letter-spacing: 2px;
    fill: #4d5157;
}

.sea text {
    font-size: 24px;
    fill: #3f7f9c;
    stroke: none;
}

.city text {
    font-size: 28px;
    font-weight: 500;
    fill: #202328;
}

.city text.small {
    font-size: 23px;
}

.country text {
    font-size: 29px;
    font-weight: 700;
    fill: #14161a;
}

.country text.big {
    font-size: 38px;
}

.map-art text.edge-left {
    text-anchor: start;
}

.map-art text.faded {
    fill: #6e7276;
    stroke: #b9e3ee;
}

.pin circle {
    fill: #fff;
    stroke: #2a2c30;
    stroke-width: 2.200;
}

.capital circle {
    fill: #fff;
    stroke: #1a1a1a;
    stroke-width: 2;
}

.capital-dot circle {
    fill: #111;
}

.wedge use {
    fill: #89bffb;
}

.wedge-red use {
    fill: #8a1c14;
}

.sliver {
    fill: none;
    stroke: #8a1c14;
    stroke-width: 2;
}

.map-art text.google {
    text-anchor: start;
    font-size: 38px;
    font-weight: 500;
    stroke: #d5eff5;
    stroke-width: 5px;
}

.g-blue { fill: #4a84ee; }
.g-red { fill: #dd4b3a; }
.g-yellow { fill: #f2b632; }
.g-green { fill: #3da651; }

/* Map controls */
.map-type {
    position: absolute;
    top: 20px;
    left: 20px;
    display: flex;
    height: 80px;
    border-radius: 3px;
    background: #fff;
    box-shadow: 0 1px 5px rgba(0, 0, 0, 0.3);
    overflow: hidden;
}

.type-btn {
    border: 0;
    background: #fff;
    font-family: Roboto, sans-serif;
    font-size: 36px;
    color: #565656;
}

.type-btn.on {
    position: relative;
    width: 159px;
    font-weight: 500;
    color: #000;
    box-shadow: 1px 0 3px rgba(0, 0, 0, 0.2);
}

.type-btn:last-child {
    width: 188px;
}

.map-btn {
    position: absolute;
    left: 3566px;
    width: 80px;
    height: 80px;
    padding: 0;
    border: 0;
    display: flex;
    align-items: center;
    justify-content: center;
    background: #fff;
    border-radius: 3px;
    box-shadow: 0 1px 5px rgba(0, 0, 0, 0.3);
}

.map-btn svg {
    fill: #666;
}

.full-btn {
    top: 20px;
}

.move-btn {
    top: 928px;
    border-radius: 50%;
}

.peg-btn {
    top: 1072px;
}

.peg {
    fill: #f0b73f;
    stroke: #7a7a7a;
    stroke-width: 1.500;
}

.peg-neck {
    fill: #d9773a;
}

.attribution {
    position: absolute;
    right: 0;
    bottom: 0;
    display: flex;
    gap: 3px;
    height: 28px;
}

.attribution span {
    padding: 0 11px;
    background: rgba(255, 255, 255, 0.68);
    font-size: 20px;
    line-height: 28px;
    color: #000;
    white-space: nowrap;
}

/* Map footer */
.map-foot {
    flex: none;
    display: flex;
    align-items: center;
    gap: 16px;
    width: 3666px;
    height: 96px;
    margin-left: 12px;
    padding-left: 28px;
    background: #dee0e4;
    font-size: 26px;
    color: #3a3d45;
}

.logo-small {
    width: 72px;
    height: 64px;
}

/* Backdrop below the page */
.backdrop {
    position: relative;
    flex: 1;
    min-height: 0;
    overflow: hidden;
    padding-top: 118px;
    text-align: center;
}

.backdrop-text {
    font-family: Inter, sans-serif;
    font-size: 570px;
    font-weight: 900;
    line-height: 600px;
    letter-spacing: -16px;
    color: #fff;
}

.backdrop-shade {
    position: absolute;
    left: 1000px;
    bottom: -50px;
    width: 1600px;
    height: 50px;
    box-shadow: 0 0 70px 14px rgba(0, 0, 0, 0.22);
}

/* Scrollbar */
.scrollbar {
    flex: none;
    width: 30px;
    padding: 8px 6px 0 7px;
    background: #fafafa;
    border-left: 1px solid #ececec;
}

.thumb {
    height: 1690px;
    border-radius: 9px;
    background: #c1c1c1;
}
```
